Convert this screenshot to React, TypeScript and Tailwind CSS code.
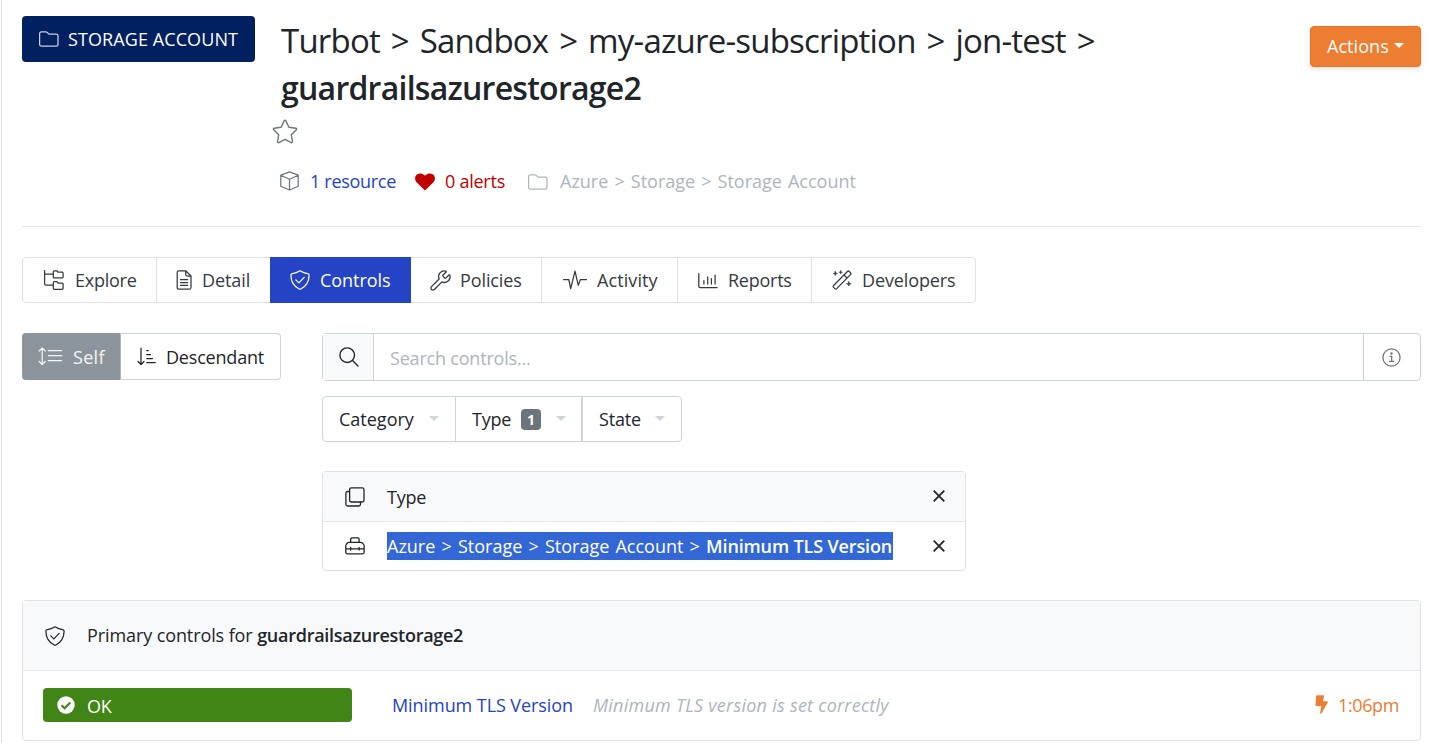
import type { ReactNode } from "react";
import { Wrench } from "lucide-react";

type IconProps = { w: number; h: number; className?: string; sw?: number; children: ReactNode };

function Icon({ w, h, className = "", sw = 1.25, children }: IconProps) {
  return (
    <svg
      width={w}
      height={h}
      viewBox={`0 0 ${w} ${h}`}
      fill="none"
      stroke="currentColor"
      strokeWidth={sw}
      strokeLinecap="round"
      strokeLinejoin="round"
      className={`shrink-0 ${className}`}
    >
      {children}
    </svg>
  );
}

function FolderIcon({ className }: { className?: string }) {
  return (
    <Icon w={20} h={16} className={className}>
      <path d="M2.5 .8h4.300c.5 0 1 .2 1.400.6l1.300 1.300c.4.300.8.500 1.300.5h6.300c1.100 0 1.900.8 1.900 1.900v8.100c0 1.100-.8 1.900-1.900 1.900H2.500c-1.100 0-1.900-.8-1.900-1.900V2.700C.6 1.600 1.400.8 2.500.8z" />
    </Icon>
  );
}

function ShieldIcon({ className }: { className?: string }) {
  return (
    <Icon w={20} h={20} className={className}>
      <path d="M10 .8c-2.400 1.500-5 2.500-7.600 2.900-.9.2-1.500.8-1.500 1.600C1 11.300 3.700 16.300 9.200 19c.5.3 1.100.3 1.600 0 5.500-2.700 8.200-7.700 8.300-13.700 0-.8-.6-1.400-1.500-1.600C15 3.300 12.400 2.300 10 .8z" />
      <path d="M5.800 9.900l3 3 5.400-5.500" />
    </Icon>
  );
}

function CloseIcon() {
  return (
    <Icon w={12} h={12} sw={1.8} className="-mt-px">
      <path d="M.7 .7l10.600 10.600M11.300.7L.7 11.300" strokeLinecap="butt" />
    </Icon>
  );
}

function Caret({ className }: { className?: string }) {
  return (
    <svg width="10" height="5" viewBox="0 0 10 5" fill="currentColor" className={`shrink-0 ${className ?? ""}`}>
      <path d="M0 0h10L5 5z" />
    </svg>
  );
}

function Header() {
  return (
    <header className="flex h-[226px] items-start border-b border-[#e4e6e9] box-content">
      <div className="mt-4 flex h-[46px] w-[233px] items-center rounded bg-[#00205f] pl-[17px] text-white">
        <FolderIcon className="-mt-px text-[#c9d1e0]" />
        <span className="ml-[9px] tracking-[0.09px]">STORAGE ACCOUNT</span>
      </div>
      <div className="ml-[26px] mt-[17px] grow">
        <h1 className="text-[33px] leading-[47px]">
          <span className="block tracking-[-0.8px] [word-spacing:3.1px]">
            Turbot &gt; Sandbox &gt; my-azure-subscription &gt; jon-test &gt;
          </span>
          <span className="block text-[32px] font-semibold leading-[47px] tracking-[-0.75px]">guardrailsazurestorage2</span>
        </h1>
        <Icon w={26} h={25} className="-ml-[9px] mt-[8px] text-[#6c757d]" sw={1.4}>
          <path d="M13 1.300c.4 0 .7.200.9.600l3 6.300 6.900 1c.8.100 1.100 1 .5 1.600l-5 4.900 1.200 6.900c.1.800-.7 1.300-1.400 1L13 20.300l-6.100 3.300c-.7.300-1.500-.200-1.400-1l1.200-6.900-5-4.900c-.6-.6-.3-1.500.5-1.600l6.900-1 3-6.300c.2-.4.500-.6.900-.6z" />
        </Icon>
        <div className="mt-6 flex h-[27px] items-center">
          <Icon w={20} h={20} className="-ml-px -mt-px text-[#6c757d]">
            <path d="M9.500 .9l8.700 3.300v11L9.500 19l-8.700-3.800v-11zM.8 4.300l8.700 4 8.700-4M9.500 8.300V19" />
          </Icon>
          <span className="ml-[10px] w-[86px] whitespace-nowrap tracking-[-0.3px] text-[#2443c5]">1 resource</span>
          <svg width="20" height="18" viewBox="0 0 20 18" fill="#c00000" className="ml-[19px] shrink-0">
            <path d="M10 17.500L1.600 9.200C-.7 6.900-.3 3 2.300 1.300 4.700-.2 7.500.2 9.200 2l.8.8.8-.8c1.700-1.800 4.500-2.200 6.900-.7 2.600 1.700 3 5.600.7 7.900z" />
          </svg>
          <span className="ml-2.5 w-[60px] whitespace-nowrap tracking-[-0.25px] text-[#c00000]">0 alerts</span>
          <FolderIcon className="ml-[23px] text-[#adb5bd]" />
          <span className="ml-3 text-[#adb5bd] [word-spacing:1.4px]">Azure &gt; Storage &gt; Storage Account</span>
        </div>
      </div>
      <button className="mt-[26px] flex h-[41px] w-[111px] items-center rounded border border-[#ee701c] bg-[#ed7d31] pl-4 text-white shadow-[0_2px_5px_rgba(0,0,0,0.12)]">
        <span className="tracking-[0.05px]">Actions</span>
        <Caret className="-mt-0.5 ml-[5px]" />
      </button>
    </header>
  );
}

function Tabs() {
  const tab = "flex h-full items-center border-r border-[#dee2e6] whitespace-nowrap";
  return (
    <nav className="mt-[30px] flex h-[46px] w-[954px] rounded border border-[#dee2e6] text-[#343a40]">
      <div className={`${tab} w-[134px] pl-5`}>
        <Icon w={21} h={20} className="mr-[11px]">
          <path d="M1.600.6v13.200c0 .8.500 1.300 1.300 1.300H10M1.600 4.200H10" />
          <path d="M11.300.8h2.500l1.300 1.400h4c.6 0 1 .4 1 1v3.700c0 .6-.4 1-1 1h-7.800c-.6 0-1-.4-1-1V1.800c0-.6.4-1 1-1zM11.300 11.600h2.500l1.300 1.400h4c.6 0 1 .4 1 1v4.300c0 .6-.4 1-1 1h-7.800c-.6 0-1-.4-1-1v-5.700c0-.6.4-1 1-1z" />
        </Icon>
        <span className="tracking-[-0.25px]">Explore</span>
      </div>
      <div className="flex h-full w-[113px] items-center whitespace-nowrap pl-[19px]">
        <Icon w={16} h={20} className="mr-[10px]">
          <path d="M3 .8h6.700L15 6v11.400c0 1.100-.7 1.800-1.800 1.800H3c-1.100 0-1.800-.7-1.800-1.800V2.600C1.200 1.500 1.900.8 3 .8zM9.700.8v3.700c0 .9.600 1.500 1.500 1.500H15" />
          <path d="M4.500 9.700h7.200M4.500 12.500h7.200M4.500 15.300h7.200" />
        </Icon>
        <span className="tracking-[-0.1px]">Detail</span>
      </div>
      <div className="-my-px box-content flex h-[46px] w-[141px] items-center whitespace-nowrap bg-[#2443c5] text-white">
        <ShieldIcon className="-mt-px ml-5 mr-[10px]" />
        <span className="tracking-[-0.05px]">Controls</span>
      </div>
      <div className={`${tab} w-[131px] pl-[18px]`}>
        <Wrench size={23} strokeWidth={1.35} className="mr-[8px] shrink-0" />
        <span className="tracking-[-0.1px]">Policies</span>
      </div>
      <div className={`${tab} w-[136px] pl-5`}>
        <Icon w={26} h={20} className="mr-[9px]">
          <path d="M1.500 9.500h5.300l1.900 9.200L13 1.200l3.300 14.200 2.100-5.900h6.100" />
        </Icon>
        <span className="tracking-[0.1px]">Activity</span>
      </div>
      <div className={`${tab} w-[134px] pl-5`}>
        <Icon w={20} h={16} className="mr-[10px] mt-0.5">
          <path d="M.8.700v12.600c0 .8.500 1.300 1.300 1.300h17M5.900 7.700v3.300M9.700 3.800V11M13.400 5.700V11M17.100 2v9" />
        </Icon>
        <span className="tracking-[-0.25px]">Reports</span>
      </div>
      <div className="flex h-full grow items-center whitespace-nowrap pl-5">
        <Icon w={21} h={20} className="mr-[9px]">
          <path d="M1.600 15.500L15.400 1.500c.6-.6 1.300-.6 1.900 0l1.200 1.200c.6.600.6 1.300 0 1.900L4.700 18.600c-.6.600-1.300.6-1.900 0l-1.200-1.200c-.6-.6-.6-1.300 0-1.900zM12 5l3 3" />
          <path d="M3.300 1.400l.6 1.500 1.500.6-1.500.6-.6 1.500-.6-1.500-1.500-.6 1.500-.6zM16.800 11.700l.6 1.500 1.700.6-1.700.6-.6 1.600-.6-1.600-1.700-.6 1.700-.6z" fill="currentColor" strokeWidth="0.6" />
          <path d="M8.700.700v3M7.200 2.200h3" strokeWidth="1" />
        </Icon>
        <span className="tracking-[-0.12px]">Developers</span>
      </div>
    </nav>
  );
}

function ScopeToggle() {
  return (
    <div className="flex h-[47px] w-[259px] text-[#212529]">
      <div className="flex w-[98px] items-center rounded-l bg-[#8c959c] pl-4 text-[#f4f5f6]">
        <Icon w={25} h={19} className="mr-[10px]">
          <path d="M4.200 1v16.500M1.200 4l3-3 3 3M1.200 14.500l3 3 3-3M10.300 3.500h13.400M10.300 8.500h13.400M10.300 13.500h13.400" />
        </Icon>
        <span className="mt-px tracking-[0.3px]">Self</span>
      </div>
      <div className="flex grow items-center rounded-r border border-[#ced4da] border-l-[#adb5bd] pl-4">
        <Icon w={20} h={19} className="mr-[9px]">
          <path d="M4 1v16.500M1 14.500l3 3 3-3M9.700 3.500h1.500M9.700 7.500h3.800M9.700 11.500h5.800M9.700 15.500h8.500" />
        </Icon>
        <span className="mt-px tracking-[-0.2px]">Descendant</span>
      </div>
    </div>
  );
}

function Filters() {
  return (
    <div className="mt-[15px] flex h-[46px] w-[360px] rounded border border-[#ced4da] text-[#212529]">
      <div className="flex w-[133px] items-center border-r border-[#ced4da] pl-4">
        <span className="w-[75px]">Category</span>
        <Caret className="-mt-0.5 ml-[15px] text-[#ced4da]" />
      </div>
      <div className="flex w-[127px] items-center border-r-2 border-[#ced4da] pl-4">
        <span className="w-[39px] tracking-[-0.2px]">Type</span>
        <span className="ml-[10px] flex h-[21px] w-5 items-center justify-center rounded bg-[#6c757d] text-[14px] font-bold text-white">1</span>
        <Caret className="-mt-0.5 ml-[15px] text-[#ced4da]" />
      </div>
      <div className="flex grow items-center pl-4">
        <span className="w-[42px] tracking-[-0.2px]">State</span>
        <Caret className="-mt-0.5 ml-[14px] text-[#ced4da]" />
      </div>
    </div>
  );
}

function TypeCard() {
  return (
    <div className="mt-[29px] h-[100px] w-[644px] rounded border border-[#dee2e6] text-[#212529]">
      <div className="flex h-[50px] items-center border-b border-[#e4e7eb] bg-[#f8f9fb] pl-[22px] pr-5">
        <Icon w={20} h={20} sw={1.3}>
          <rect x="4.600" y=".8" width="14.400" height="14.200" rx="1.800" />
          <path d="M4.500 4.500H2.700c-1.100 0-1.800.7-1.800 1.800v10.900c0 1.100.7 1.800 1.800 1.800h11c1.100 0 1.800-.7 1.800-1.800v-2" />
        </Icon>
        <span className="ml-[22px] mt-px grow tracking-[-0.2px]">Type</span>
        <CloseIcon />
      </div>
      <div className="flex h-12 items-center pl-[22px] pr-5">
        <Icon w={20} h={18} sw={1.3}>
          <path d="M5.700 5.300V2.200c0-.8.500-1.300 1.300-1.300h5.800c.8 0 1.300.5 1.300 1.300v3.100M3.900 5.300h12c.5 0 .9.200 1.200.5l1.500 1.600c.3.300.5.700.5 1.100v6.800c0 .9-.6 1.500-1.500 1.500H2.300c-.9 0-1.500-.6-1.500-1.500V8.500c0-.4.200-.8.500-1.100l1.400-1.600c.3-.3.700-.5 1.200-.5zM.8 11.800h18.300M5.700 10.500v2.600M14.100 10.500v2.600" />
        </Icon>
        <div className="ml-[22px] grow">
          <span className="inline-flex h-7 w-[506px] items-center whitespace-pre bg-[#3367d6] text-white">
            <span className="[word-spacing:1.5px]">Azure &gt; Storage &gt; Storage Account &gt; </span>
            <b className="font-semibold tracking-[-0.14px]">Minimum TLS Version</b>
          </span>
        </div>
        <CloseIcon />
      </div>
    </div>
  );
}

function ControlsCard() {
  return (
    <section className="mt-[29px] h-[141px] rounded border border-[#dee2e6] text-[#212529]">
      <div className="flex h-[70px] items-center border-b border-[#e1e5eb] bg-[#f8f9fb] pl-[22px]">
        <ShieldIcon />
        <span className="ml-[22px] whitespace-pre tracking-[-0.1px]">Primary controls for </span>
        <b className="font-semibold tracking-[-0.27px]">guardrailsazurestorage2</b>
      </div>
      <div className="flex h-[69px] items-center pl-5 pr-[21px]">
        <div className="-mt-px flex h-[34px] w-[309px] items-center self-start rounded bg-[#418516] pl-3.5 text-white [margin-top:17px]">
          <svg width="18" height="18" viewBox="0 0 18 18" className="shrink-0">
            <circle cx="9" cy="9" r="8.700" fill="#fff" />
            <path d="M4.500 9.300l3.100 3 5.700-5.800" fill="none" stroke="#418516" strokeWidth="2.200" />
          </svg>
          <span className="ml-3 mt-0.5 tracking-[-0.3px]">OK</span>
        </div>
        <span className="ml-10 w-[181px] whitespace-nowrap tracking-[-0.07px] text-[#2443c5]">Minimum TLS Version</span>
        <i className="ml-5 grow tracking-[0.25px] text-[#adb5bd]">Minimum TLS version is set correctly</i>
        <svg width="13" height="19" viewBox="0 0 13 19" fill="#ed7d31" className="-mt-0.5 shrink-0">
          <path d="M2 .3h6.200c.6 0 .9.400.8.900L7.900 6.300h4.100c.7 0 1 .6.700 1.200L6.600 18.300c-.4.800-1.700.5-1.500-.4L6.300 11H1.400c-.6 0-1-.4-.9-1L1.200 1c0-.4.400-.7.800-.7z" />
        </svg>
        <span className="ml-2.5 tracking-[-0.38px] text-[#ed7d31]">1:06pm</span>
      </div>
    </section>
  );
}

export default function App() {
  return (
    <div className="h-[743px] overflow-hidden bg-white pl-px font-['Open_Sans','Noto_Sans',sans-serif] text-[18px] leading-[27px] text-[#212529]">
      <main className="h-full border-l border-[#e2e3e6] pl-5 pr-2.5">
        <Header />
        <Tabs />
        <div className="mt-[30px] flex items-start gap-[41px]">
          <ScopeToggle />
          <div className="grow">
            <div className="flex h-12 items-stretch rounded border border-[#ced4da]">
              <div className="flex w-[51px] items-center justify-center border-r border-[#ced4da] bg-[#f8f9fb] pl-px">
                <Icon w={20} h={20} sw={1.4}>
                  <circle cx="8.200" cy="8.200" r="7.300" />
                  <path d="M13.500 13.500l5.500 5.500" />
                </Icon>
              </div>
              <span className="flex grow items-center pl-4 pt-0.5 tracking-[-0.2px] text-[#adb5bd]">Search controls...</span>
              <div className="flex w-[57px] items-center justify-center border-l border-[#ced4da] pr-px text-[#6c757d]">
                <Icon w={19} h={19}>
                  <circle cx="9.500" cy="9.500" r="8.600" />
                  <path d="M8 8.300h1.700v5M7.500 13.400h4.300" />
                  <circle cx="9.500" cy="5.500" r=".6" fill="currentColor" />
                </Icon>
              </div>
            </div>
            <Filters />
            <TypeCard />
          </div>
        </div>
        <ControlsCard />
      </main>
    </div>
  );
}
